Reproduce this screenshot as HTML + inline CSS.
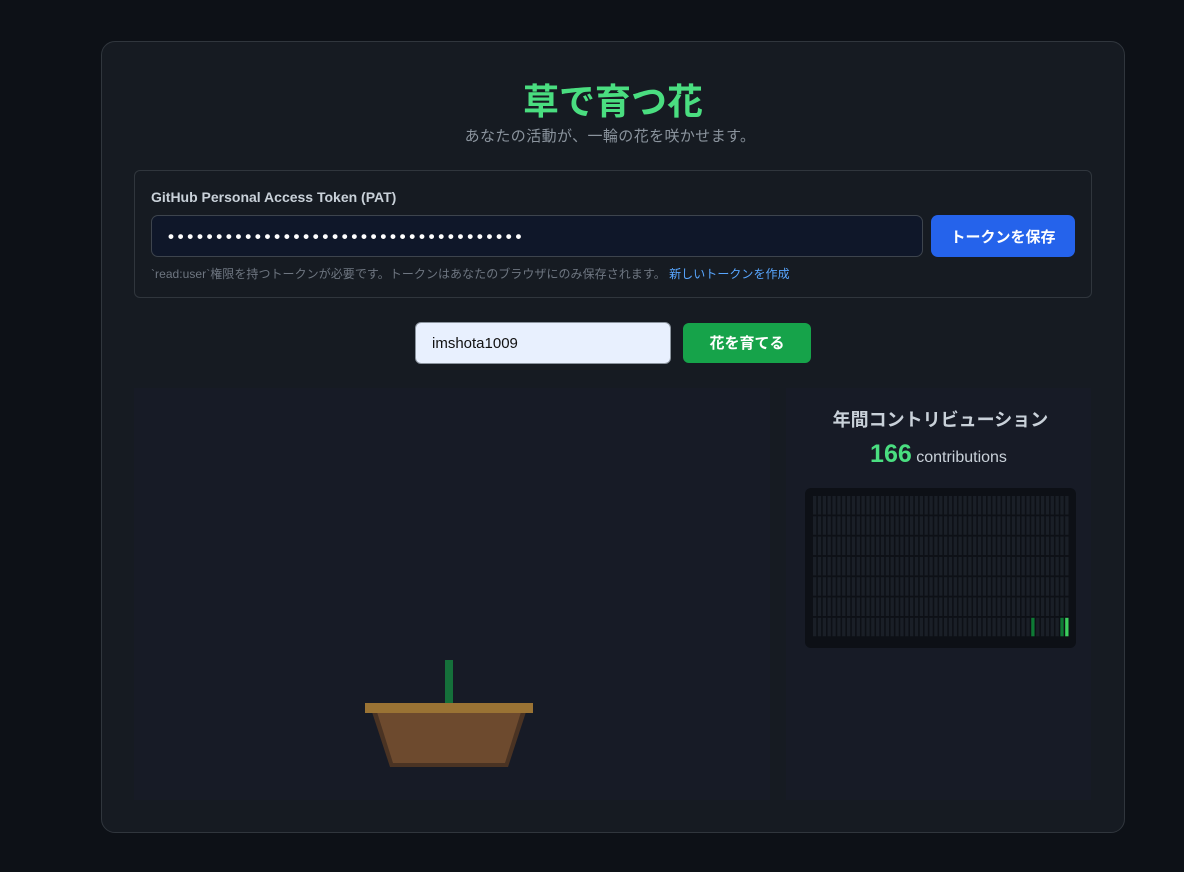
<!DOCTYPE html><html><head><meta charset="utf-8"><style>
*{box-sizing:border-box;margin:0;padding:0}
body{width:1184px;height:872px;background:#0d1117;font-family:"Liberation Sans","Noto Sans CJK JP",sans-serif;position:relative;overflow:hidden}
.card{position:absolute;left:101px;top:41px;width:1024px;height:792px;background:#161b22;border:1px solid #30363d;border-radius:14px}
h1{position:absolute;top:73px;left:101px;width:1024px;text-align:center;color:#4ade80;font-size:36px;font-weight:bold}
.sub{position:absolute;top:125px;left:101px;width:1018px;text-align:center;color:#8b949e;font-size:15px;letter-spacing:0.4px}
.pat{position:absolute;left:134px;top:170px;width:958px;height:128px;border:1px solid #30363d;border-radius:6px}
.lbl{position:absolute;left:151px;top:189px;color:#c9d1d9;font-size:14px;font-weight:bold}
.inp{position:absolute;left:151px;top:215px;width:772px;height:42px;background:#0f1729;border:1px solid #3d444d;border-radius:7px;color:#fff;font-size:17px;padding:8px 16px;letter-spacing:3.7px;line-height:26px;font-weight:bold}
.btn1{position:absolute;left:931px;top:215px;width:144px;height:42px;background:#2563eb;border-radius:7px;color:#fff;font-size:15px;font-weight:bold;text-align:center;line-height:46px}
.hint{position:absolute;left:151px;top:265px;color:#6e7681;font-size:12px;letter-spacing:0.05px}
.hint span{color:#58a6ff}
.user{position:absolute;left:415px;top:322px;width:256px;height:42px;background:#e8f0fe;border:1px solid #8b949e;border-radius:6px;color:#111;font-size:15px;padding:12px 16px}
.btn2{position:absolute;left:683px;top:323px;width:128px;height:40px;background:#16a34a;border-radius:6px;color:#fff;font-size:15px;font-weight:bold;text-align:center;line-height:42px}
.left{position:absolute;left:134px;top:388px;width:636px;height:412px;background:#171b26}
.right{position:absolute;left:786px;top:388px;width:305px;height:412px;background:#171b26}
.t2{position:absolute;top:406px;left:788px;width:305px;text-align:center;color:#c9d1d9;font-size:18px;font-weight:bold}
.cnt{position:absolute;top:440px;left:786px;width:305px;text-align:center;color:#c9d1d9;font-size:16px}
.cnt b{color:#4ade80;font-size:25px}
.grid{position:absolute;left:805px;top:488px;width:271px;height:160px;background:#0d1016;border-radius:6px}
</style></head><body>
<div class="card"></div>
<h1>草で育つ花</h1>
<div class="sub">あなたの活動が、一輪の花を咲かせます。</div>
<div class="pat"></div>
<div class="lbl">GitHub Personal Access Token (PAT)</div>
<div class="inp">•••••••••••••••••••••••••••••••••••••</div>
<div class="btn1">トークンを保存</div>
<div class="hint">`read:user`権限を持つトークンが必要です。トークンはあなたのブラウザにのみ保存されます。 <span>新しいトークンを作成</span></div>
<div class="user">imshota1009</div>
<div class="btn2">花を育てる</div>
<div class="left"></div>
<svg style="position:absolute;left:0;top:0" width="1184" height="872">
<rect x="445" y="660" width="8" height="48" fill="#15703a"/>
<polygon points="372,712 526,712 508,767 390,767" fill="#4a3323"/>
<polygon points="377,712 521,712 505,763 393,763" fill="#6d4a2e"/>
<rect x="365" y="703" width="168" height="10" fill="#9a7334"/>
</svg>
<div class="right"></div>
<div class="t2">年間コントリビューション</div>
<div class="cnt"><b>166</b> contributions</div>
<div class="grid"></div>
<svg id="g" style="position:absolute;left:0;top:0" width="1184" height="872"></svg>
<script>
var s='';for(var c=0;c<53;c++)for(var r=0;r<7;r++){var col='#1a1f27';
if(r==6&&c==45)col='#0e7a35';if(r==6&&c==51)col='#0e7a35';if(r==6&&c==52)col='#3ccf5e';
s+='<rect x="'+(813+c*4.85).toFixed(2)+'" y="'+(496+r*20.3).toFixed(1)+'" width="3.3" height="18.5" fill="'+col+'"/>';}
document.getElementById('g').innerHTML=s;
</script>
</body></html>
